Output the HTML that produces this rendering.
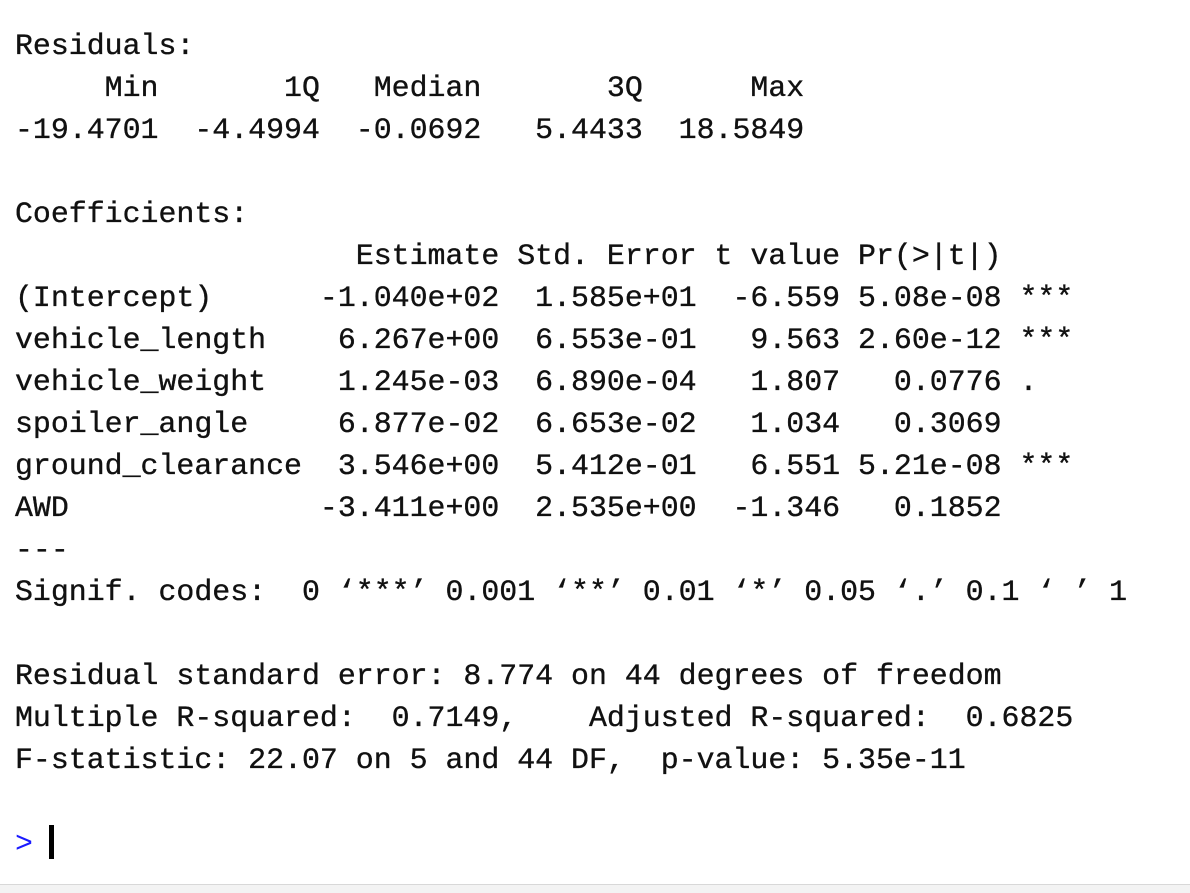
<!DOCTYPE html>
<html><head><meta charset="utf-8"><style>
html,body{margin:0;padding:0;background:#fff;width:1190px;height:892px;overflow:hidden}
pre{margin:0;position:absolute;left:15px;top:25px;font-family:"Liberation Mono","DejaVu Sans Mono",monospace;font-size:29.9px;line-height:42px;color:#111;white-space:pre;-webkit-text-stroke:0.35px #111}
.p{color:#1a1aff;-webkit-text-stroke:0}
.cur{display:inline-block;width:5px;height:34px;background:#000;vertical-align:-7px;margin-left:16px}
.bot{position:absolute;left:0;right:0;top:884px;height:8px;background:#f3f3f3;border-top:1px solid #d8d8d8}
</style></head><body>
<pre>Residuals:
     Min       1Q   Median       3Q      Max 
-19.4701  -4.4994  -0.0692   5.4433  18.5849 

Coefficients:
                   Estimate Std. Error t value Pr(&gt;|t|)    
(Intercept)      -1.040e+02  1.585e+01  -6.559 5.08e-08 ***
vehicle_length    6.267e+00  6.553e-01   9.563 2.60e-12 ***
vehicle_weight    1.245e-03  6.890e-04   1.807   0.0776 .  
spoiler_angle     6.877e-02  6.653e-02   1.034   0.3069    
ground_clearance  3.546e+00  5.412e-01   6.551 5.21e-08 ***
AWD              -3.411e+00  2.535e+00  -1.346   0.1852    
---
Signif. codes:  0 ‘***’ 0.001 ‘**’ 0.01 ‘*’ 0.05 ‘.’ 0.1 ‘ ’ 1

Residual standard error: 8.774 on 44 degrees of freedom
Multiple R-squared:  0.7149,    Adjusted R-squared:  0.6825 
F-statistic: 22.07 on 5 and 44 DF,  p-value: 5.35e-11

<span class="p">&gt;</span><span class="cur"></span></pre>
<div class="bot"></div>
</body></html>
